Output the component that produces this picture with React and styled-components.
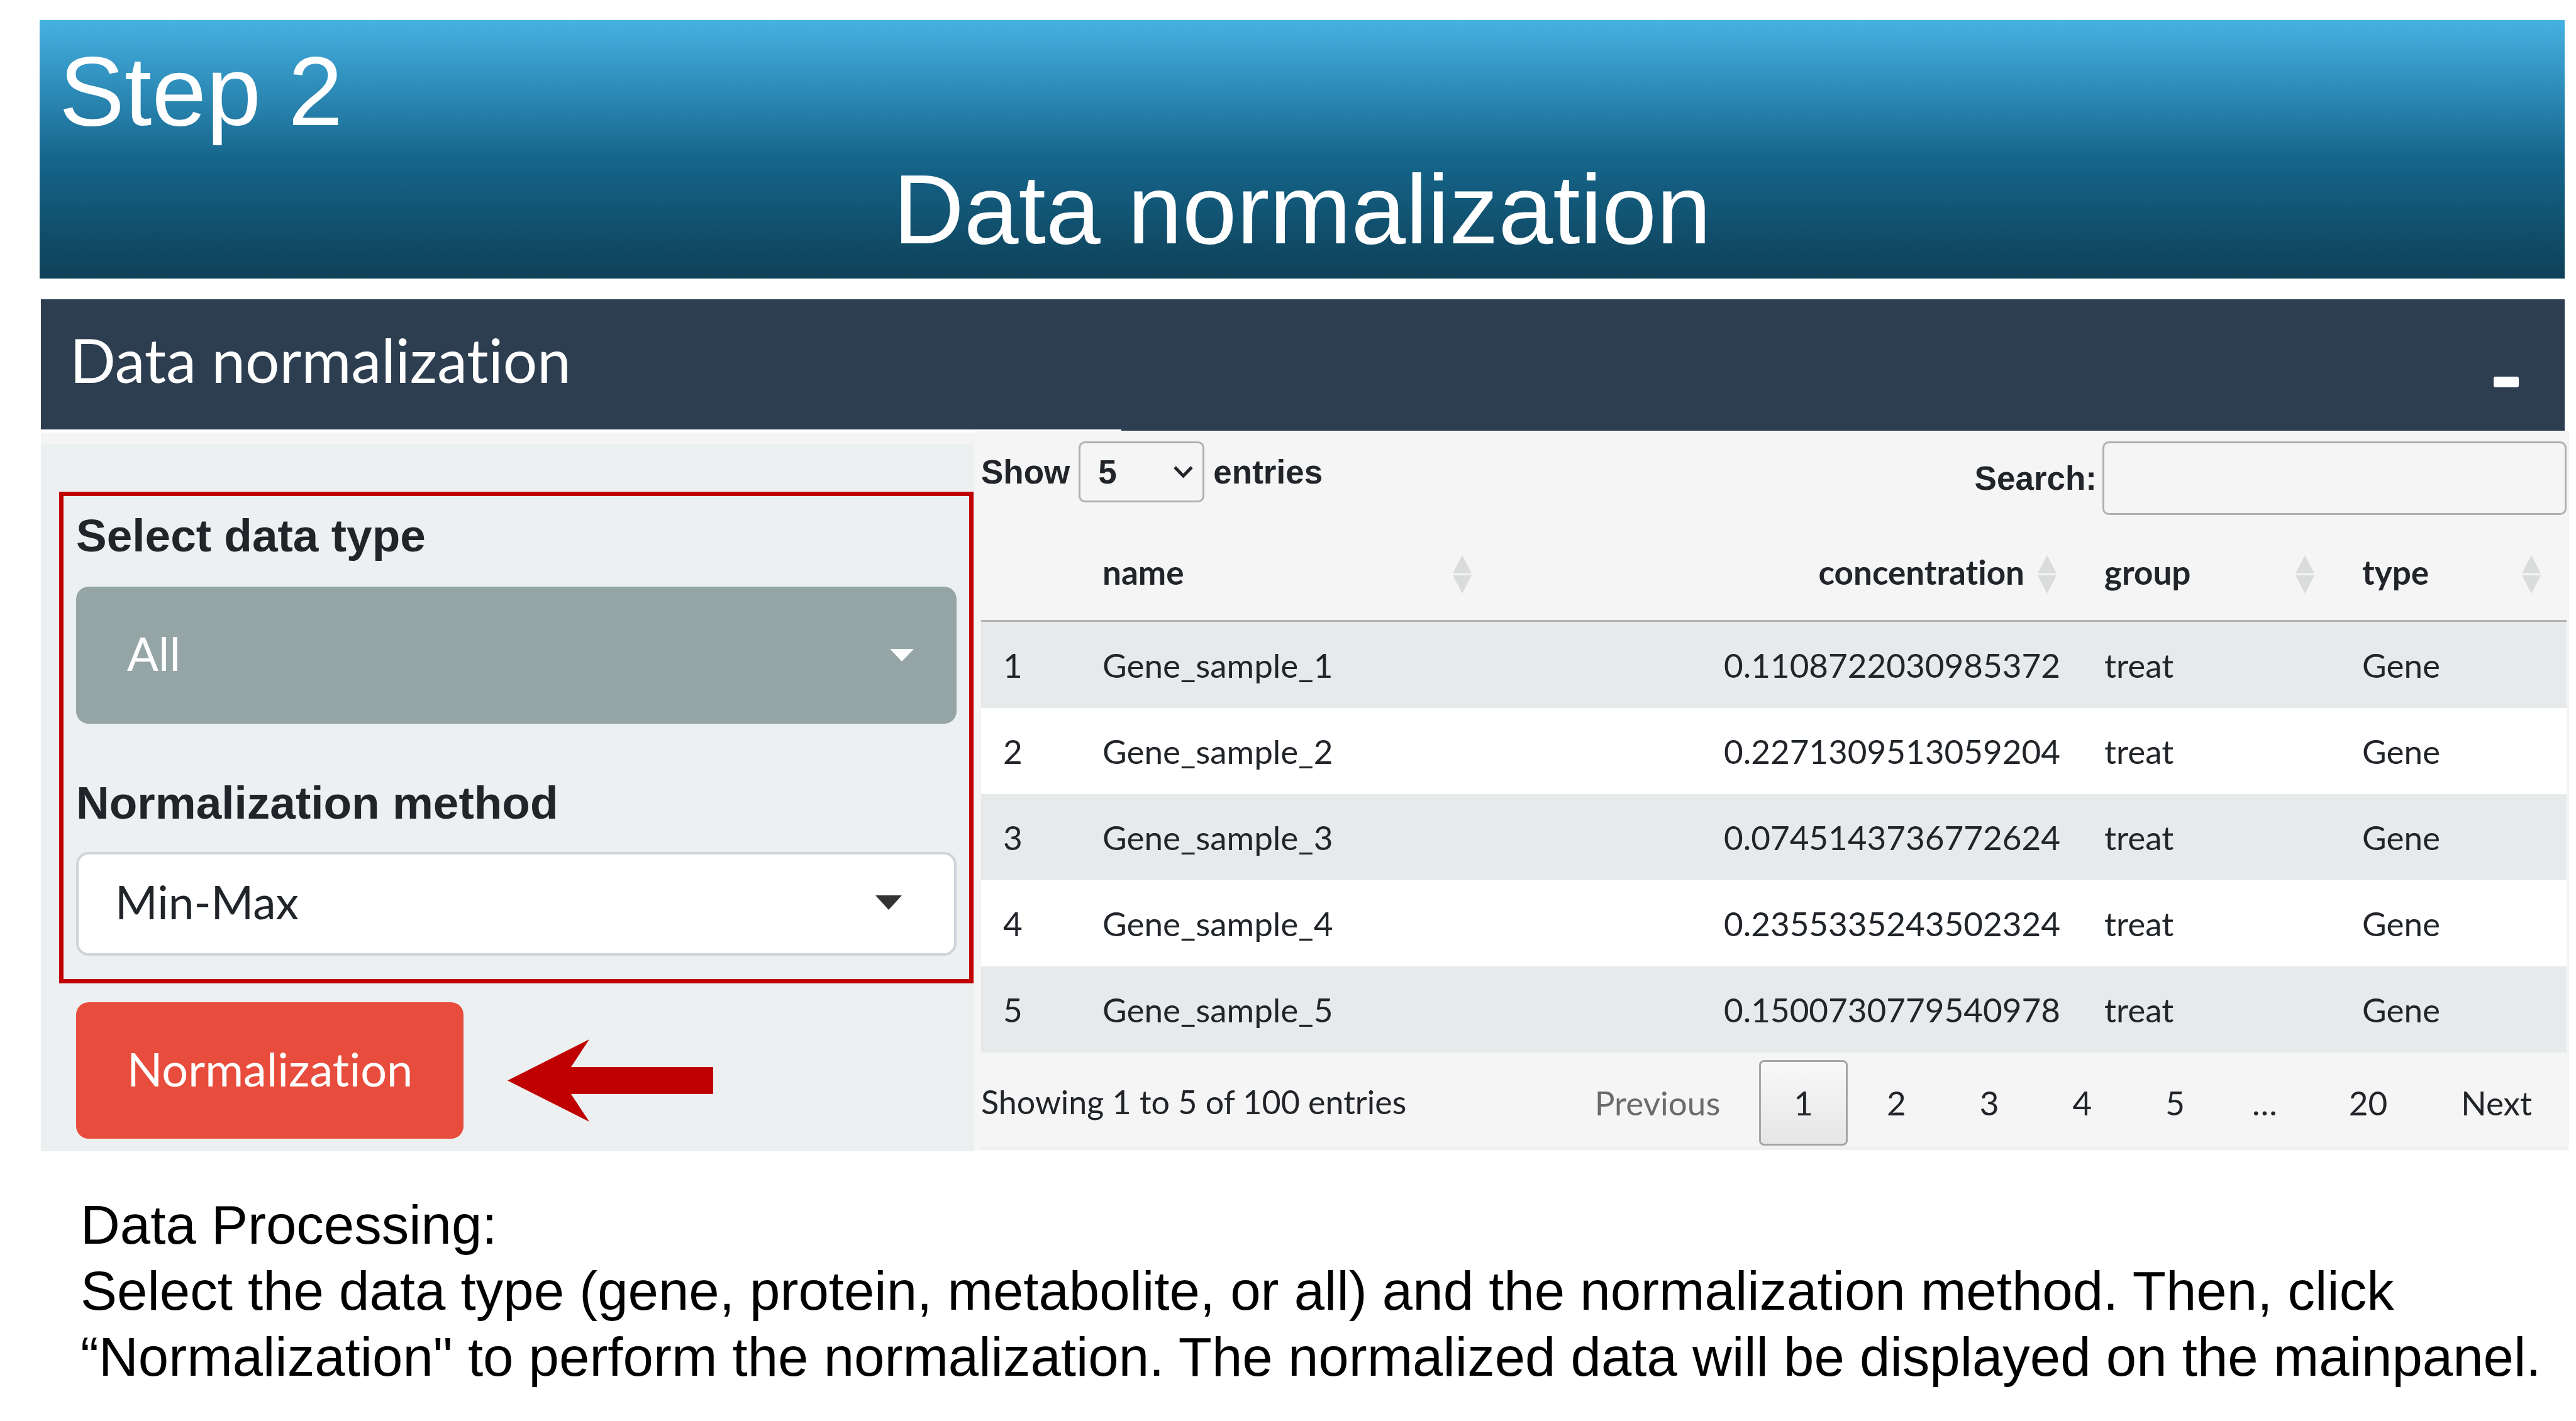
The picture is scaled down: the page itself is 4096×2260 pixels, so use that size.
import React from "react";
import styled, { createGlobalStyle } from "styled-components";

const lato = `Lato, "Open Sans", sans-serif`;
const arial = `"Liberation Sans", Arial, sans-serif`;

const GlobalStyle = createGlobalStyle`
  * { box-sizing: border-box; }
  body {
    margin: 0;
    background: #fff;
    color: #212529;
    font-family: ${lato};
    font-variant-ligatures: none;
  }
  button, select, input {
    font: inherit;
    font-variant-ligatures: none;
    color: inherit;
    margin: 0;
  }
`;

const Slide = styled.main`
  padding: 32px 11px 0 63px;
`;

const Banner = styled.header`
  margin-right: 7px;
  padding: 19px 31px 16px;
  background: linear-gradient(#46b1e3, #15658b 54%, #0e4057);
  color: #fff;
  font: 156px/188px ${arial};
`;

const BannerTitle = styled.h1`
  margin: 0;
  font: inherit;
  text-align: center;
`;

const Box = styled.section`
  margin: 33px 0 0 2px;
`;

const BoxHeader = styled.div`
  position: relative;
  display: flex;
  justify-content: space-between;
  align-items: flex-end;
  margin-right: 7px;
  padding: 37px 73px 54px 46px;
  background: #2d3e50;
  color: #fff;

  &::after {
    content: "";
    position: absolute;
    left: 0;
    bottom: 0;
    width: 42.8%;
    height: 2px;
    background: #fff;
  }
`;

const BoxTitle = styled.h2`
  margin: 0;
  font-size: 96px;
  line-height: 118px;
  font-weight: 400;
  font-variant-ligatures: none;
`;

const CollapseButton = styled.button`
  padding: 15px 0;
  border: 0;
  background: none;

  span {
    display: block;
    width: 40px;
    height: 17px;
    border-radius: 3px;
    background: #fff;
  }
`;

const BoxBody = styled.div`
  display: grid;
  grid-template-columns: 1484fr 2536fr;
  align-items: start;
`;

const Sidebar = styled.div`
  margin-top: 3px;
  padding: 76px 1px 20px 29px;
  border-top: 18px solid #f4f4f4;
  background: #ecf0f1;
`;

const Highlight = styled.div`
  padding: 19px 20px 37px;
  border: 7px solid #c00000;
`;

const Field = styled.div`
  & + & {
    margin-top: 82px;
  }
`;

const FieldLabel = styled.label`
  display: block;
  margin-bottom: ${(p) => p.$gap}px;
  font: bold 73px/88px ${arial};
`;

const SelectWrap = styled.div`
  position: relative;
  display: ${(p) => (p.$inline ? "inline-block" : "block")};
`;

const FieldSelect = styled.select`
  display: block;
  appearance: none;
  width: 100%;
  height: ${(p) => (p.$filled ? 218 : 165)}px;
  padding: 0 ${(p) => (p.$filled ? 81 : 58)}px 8px;
  border: ${(p) => (p.$filled ? "0" : "4px solid #ced4da")};
  border-radius: 20px;
  background: ${(p) => (p.$filled ? "#95a5a6" : "#fff")};
  color: ${(p) => (p.$filled ? "#fff" : "#212529")};
  font-size: ${(p) => (p.$filled ? 74 : 73)}px;
`;

const Caret = styled.svg`
  position: absolute;
  top: 50%;
  right: ${(p) => p.$right}px;
  transform: translateY(-50%);
  pointer-events: none;
`;

const ActionRow = styled.div`
  display: flex;
  align-items: center;
  gap: 70px;
  padding: 30px 0 0 27px;
`;

const RunButton = styled.button`
  height: 217px;
  padding: 0 81px 6px;
  border: 0;
  border-radius: 20px;
  background: #e84c3c;
  color: #fff;
  font-size: 74px;
`;

const MainPanel = styled.div`
  margin-top: 1px;
  padding: 16px 4px 0 11px;
  background: #f5f5f5;
`;

const Toolbar = styled.div`
  display: flex;
  justify-content: space-between;
  align-items: flex-start;
  height: 131px;
  font: bold 53px/60px ${arial};
`;

const LengthLabel = styled.label`
  display: flex;
  align-items: center;
  gap: 14px;
`;

const LengthSelect = styled.select`
  display: block;
  appearance: none;
  width: 200px;
  height: 97px;
  padding: 0 28px;
  border: 3px solid #b0b0b0;
  border-radius: 10px;
  background: transparent;
`;

const SearchLabel = styled.label`
  display: flex;
  align-items: center;
  gap: 9px;
`;

const SearchInput = styled.input`
  width: 738px;
  height: 117px;
  padding: 0 18px;
  border: 3px solid #b0b0b0;
  border-radius: 10px;
  background: transparent;
`;

const Table = styled.table`
  width: 100%;
  table-layout: fixed;
  border-collapse: separate;
  border-spacing: 0;
  font-size: 53px;
  line-height: 65px;
`;

const HeadCell = styled.th`
  height: 156px;
  padding: 0 41px 0 35px;
  border-bottom: 3px solid #b0b3b2;
`;

const SortButton = styled.button`
  display: flex;
  width: 100%;
  justify-content: ${(p) => (p.$end ? "flex-end" : "space-between")};
  align-items: center;
  gap: 21px;
  padding: 0;
  border: 0;
  background: none;
  font-weight: 700;
`;

const Row = styled.tr`
  background: ${(p) => (p.$odd ? "#e6eaeb" : "#fff")};
`;

const Cell = styled.td`
  height: 137px;
  padding: 0 35px;
  text-align: ${(p) => p.$align || "left"};
`;

const TableFooter = styled.div`
  display: flex;
  justify-content: space-between;
  align-items: center;
  padding: 12px 0 1px;
  border-bottom: 6px solid #f1f1f1;
`;

const Info = styled.span`
  padding-bottom: 4px;
  font-size: 52px;
`;

const Pagination = styled.nav`
  display: flex;
  gap: 7px;
  font-size: 53px;
`;

const PageButton = styled.button`
  height: 136px;
  padding: 0 52px 2px;
  border: 3px solid ${(p) => (p.$current ? "#a5a5a5" : "transparent")};
  border-radius: 8px;
  background: ${(p) => (p.$current ? "linear-gradient(#f8f8f8, #e6e6e6)" : "none")};
  color: ${(p) => (p.disabled ? "#6b6b6b" : "#212529")};
`;

const Ellipsis = styled.span`
  margin-left: -7px;
  padding: 0 52px;
  line-height: 136px;
`;

const Notes = styled.div`
  padding: 64px 0 0 65px;
  color: #000;
  font: 87px/105px ${arial};

  p {
    margin: 0;
  }
`;

const ROWS = [
  ["Gene_sample_1", "0.1108722030985372"],
  ["Gene_sample_2", "0.2271309513059204"],
  ["Gene_sample_3", "0.0745143736772624"],
  ["Gene_sample_4", "0.2355335243502324"],
  ["Gene_sample_5", "0.1500730779540978"],
];

const COLUMNS = ["name", "concentration", "group", "type"];

function SortIcon() {
  return (
    <svg width="30" height="69" viewBox="0 0 30 69" fill="#d9dcdb" aria-hidden="true">
      <path d="M15 8 30 37H0z M0 40h30L15 69z" />
    </svg>
  );
}

export default function App() {
  return (
    <Slide>
      <GlobalStyle />
      <Banner>
        <div>Step 2</div>
        <BannerTitle>Data normalization</BannerTitle>
      </Banner>

      <Box>
        <BoxHeader>
          <BoxTitle>Data normalization</BoxTitle>
          <CollapseButton type="button" aria-label="Collapse">
            <span />
          </CollapseButton>
        </BoxHeader>

        <BoxBody>
          <Sidebar>
            <Highlight>
              <Field>
                <FieldLabel htmlFor="data-type" $gap={37}>Select data type</FieldLabel>
                <SelectWrap>
                  <FieldSelect id="data-type" $filled>
                    <option>All</option>
                  </FieldSelect>
                  <Caret $right={68} width="38" height="20" viewBox="0 0 38 20" fill="#fff">
                    <path d="M0 0h38L19 20z" />
                  </Caret>
                </SelectWrap>
              </Field>
              <Field>
                <FieldLabel htmlFor="method" $gap={34}>Normalization method</FieldLabel>
                <SelectWrap>
                  <FieldSelect id="method">
                    <option>Min-Max</option>
                  </FieldSelect>
                  <Caret $right={87} width="42" height="28" viewBox="0 0 42 28" fill="#333">
                    <path d="M0 0h42L21 23z" />
                  </Caret>
                </SelectWrap>
              </Field>
            </Highlight>
            <ActionRow>
              <RunButton type="button">Normalization</RunButton>
              <svg width="327" height="163" viewBox="0 0 327 163" fill="#c00000" aria-hidden="true">
                <path d="M0 97.5 130 32 101 76H327v43H101l29 44z" />
              </svg>
            </ActionRow>
          </Sidebar>

          <MainPanel>
            <Toolbar>
              <LengthLabel>
                Show
                <SelectWrap $inline>
                  <LengthSelect>
                    <option>5</option>
                  </LengthSelect>
                  <Caret $right={18} width="31" height="20" viewBox="0 0 31 20" fill="none" stroke="#212529" strokeWidth="5">
                    <path d="M2 2 15.5 16 29 2" />
                  </Caret>
                </SelectWrap>
                entries
              </LengthLabel>
              <SearchLabel>
                Search:
                <SearchInput type="search" />
              </SearchLabel>
            </Toolbar>

            <Table>
              <colgroup>
                <col style={{ width: 158 }} />
                <col style={{ width: 663 }} />
                <col style={{ width: 930 }} />
                <col style={{ width: 410 }} />
                <col style={{ width: 360 }} />
              </colgroup>
              <thead>
                <tr>
                  <HeadCell />
                  {COLUMNS.map((name) => (
                    <HeadCell key={name} scope="col">
                      <SortButton type="button" $end={name === "concentration"}>
                        {name}
                        <SortIcon />
                      </SortButton>
                    </HeadCell>
                  ))}
                </tr>
              </thead>
              <tbody>
                {ROWS.map(([name, value], i) => (
                  <Row key={name} $odd={i % 2 === 0}>
                    <Cell>{i + 1}</Cell>
                    <Cell>{name}</Cell>
                    <Cell $align="right">{value}</Cell>
                    <Cell>treat</Cell>
                    <Cell>Gene</Cell>
                  </Row>
                ))}
              </tbody>
            </Table>

            <TableFooter>
              <Info>Showing 1 to 5 of 100 entries</Info>
              <Pagination aria-label="Pages">
                <PageButton disabled>Previous</PageButton>
                <PageButton $current>1</PageButton>
                <PageButton>2</PageButton>
                <PageButton>3</PageButton>
                <PageButton>4</PageButton>
                <PageButton>5</PageButton>
                <Ellipsis>…</Ellipsis>
                <PageButton>20</PageButton>
                <PageButton>Next</PageButton>
              </Pagination>
            </TableFooter>
          </MainPanel>
        </BoxBody>
      </Box>

      <Notes>
        <p>Data Processing:</p>
        <p>
          Select the data type (gene, protein, metabolite, or all) and the normalization method.
          Then, click “Normalization" to perform the normalization. The normalized data will be
          displayed on the mainpanel.
        </p>
      </Notes>
    </Slide>
  );
}
